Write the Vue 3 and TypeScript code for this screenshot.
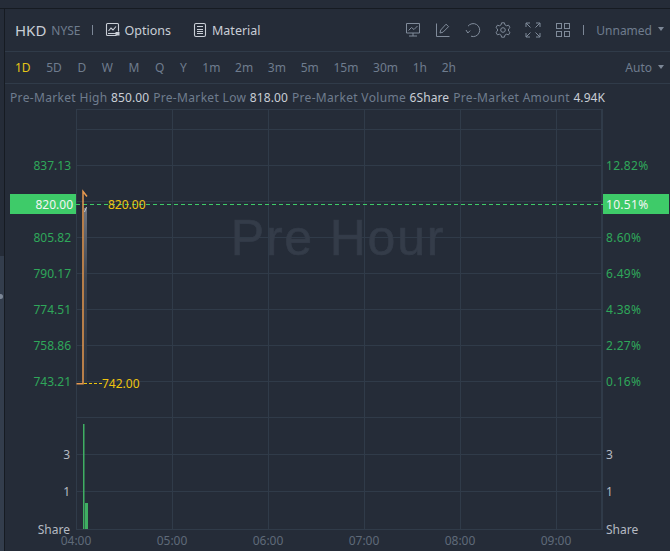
<script setup lang="ts">
const periods = ['1D','5D','D','W','M','Q','Y','1m','2m','3m','5m','15m','30m','1h','2h']
const stats = [
  ['Pre-Market High','850.00'],
  ['Pre-Market Low','818.00'],
  ['Pre-Market Volume','6Share'],
  ['Pre-Market Amount','4.94K'],
]
const hLines = [129,165,201,237,273,309,345,381,417,454,491]
const vLines = [172,268,364,460,556]
const leftLabels = [['837.13',165],['805.82',237],['790.17',273],['774.51',309],['758.86',345],['743.21',381]] as const
const rightLabels = [['12.82%',165],['8.60%',237],['6.49%',273],['4.38%',309],['2.27%',345],['0.16%',381]] as const
const times = [['04:00',76],['05:00',172],['06:00',268],['07:00',364],['08:00',460],['09:00',556]] as const
</script>

<template>
  <div class="page">
    <div class="rail"><div class="rail-top"></div><div class="rail-handle"><i></i></div></div>
    <div class="main">
      <header class="toolbar">
        <span class="sym">HKD</span>
        <span class="exch">NYSE</span>
        <span class="sep"></span>
        <button class="tool first">
          <svg width="18" height="18" viewBox="0 0 18 18" fill="none" stroke="#c9ced6" stroke-width="1.1">
            <path d="M12.5 14.5H3.5a1 1 0 0 1-1-1v-10a1 1 0 0 1 1-1h10a1 1 0 0 1 1 1v7"/>
            <path d="M4.500 10l2.500-3 2 2 3-3.500" />
            <rect x="11.500" y="11" width="4" height="3.500" fill="#c9ced6" stroke="none"/>
            <path d="M4 12.500h8" />
          </svg>
          Options
        </button>
        <button class="tool second">
          <svg width="18" height="18" viewBox="0 0 18 18" fill="none" stroke="#c9ced6" stroke-width="1.1">
            <rect x="3.500" y="2.500" width="11" height="13" rx="1.500"/>
            <path d="M6 5.500h6M6 8.500h6M6 10.500h6M6 12.500h6" stroke-width="1.2"/>
          </svg>
          Material
        </button>
        <div class="spacer"></div>
        <div class="icons">
          <svg width="16" height="16" viewBox="0 0 16 16" fill="none" stroke="#808b9a"><path d="M1.500 1.500h13v9.500h-13zM8 11v3M4 14h8"/><path d="M3.500 8.500l3-3 2.500 2 3.500-3.500"/></svg>
          <svg width="16" height="16" viewBox="0 0 16 16" fill="none" stroke="#808b9a"><path d="M1.500 1.500v13h13"/><path d="M5 11l.7-3L11 2.200l2.600 2.400L8 10.200z"/></svg>
          <svg width="16" height="16" viewBox="0 0 16 16" fill="none" stroke="#808b9a"><path d="M3 4.200A6.500 6.500 0 1 1 6 14.200"/><path d="M1 8l1.800 3 2.400-2.400"/></svg>
          <svg width="16" height="16" viewBox="0 0 16 16" fill="none" stroke="#808b9a"><path d="M6.600.8h2.800l.5 2 1.700 1 2-.6 1.400 2.400-1.500 1.400v2l1.500 1.400-1.400 2.400-2-.6-1.700 1-.5 2H6.600l-.5-2-1.700-1-2 .6L1 10.400l1.500-1.400V7L1 5.600l1.400-2.400 2 .6 1.700-1z"/><circle cx="8" cy="8" r="2.300"/></svg>
          <svg width="16" height="16" viewBox="0 0 16 16" fill="none" stroke="#808b9a"><path d="M1 5V1h4M1 1l4.500 4.500M11 1h4v4M15 1l-4.500 4.500M1 11v4h4M1 15l4.500-4.500M15 11v4h-4M15 15l-4.500-4.500"/></svg>
          <svg width="16" height="16" viewBox="0 0 16 16" fill="none" stroke="#808b9a"><rect x="1.500" y="1.500" width="5" height="5"/><rect x="9.500" y="1.500" width="5" height="5"/><rect x="1.500" y="9.500" width="5" height="5"/><rect x="9.500" y="9.500" width="5" height="5"/></svg>
        </div>
        <span class="sep right"></span>
        <span class="select">Unnamed<i class="caret"></i></span>
      </header>

      <nav class="periods">
        <span v-for="(p, i) in periods" :key="p" class="period" :class="{ active: i === 0, wide: i < 7 }">{{ p }}</span>
        <div class="spacer"></div>
        <span class="select auto">Auto<i class="caret"></i></span>
      </nav>

      <div class="stats">
        <span v-for="s in stats" :key="s[0]" class="stat">{{ s[0] }} <b>{{ s[1] }}</b></span>
      </div>
    </div>

    <svg class="chart" width="670" height="442" viewBox="0 109 670 442">
      <defs>
        <linearGradient id="fade" x1="0" y1="0" x2="0" y2="1">
          <stop offset="0" stop-color="#6d737e"/>
          <stop offset="0.4" stop-color="#3e4551"/>
          <stop offset="1" stop-color="#2b333f"/>
        </linearGradient>
      </defs>
      <g stroke="#303b49" stroke-width="1" shape-rendering="crispEdges">
        <path v-for="y in hLines" :key="y" :d="`M76 ${y + .5}H602`"/>
        <path v-for="x in vLines" :key="x" :d="`M${x + .5} 109V530`"/>
        <path d="M76 109.500H602M76.500 109V530M76 529.500H602"/>
        <path d="M602 109V530" stroke-width="2"/>
      </g>
      <text class="watermark" x="338" y="255" text-anchor="middle">Pre Hour</text>

      <g class="lbl green">
        <text v-for="l in leftLabels" :key="l[0]" x="71" :y="l[1] + 5" text-anchor="end">{{ l[0] }}</text>
        <text v-for="l in rightLabels" :key="l[0]" class="pct" x="606" :y="l[1] + 5">{{ l[0] }}</text>
      </g>

      <rect x="10" y="194" width="66" height="20" fill="#3ecb69"/>
      <rect x="603" y="194" width="66" height="20" fill="#3ecb69"/>
      <path d="M76 204.500H603" stroke="#3ecb69" stroke-dasharray="4 3" shape-rendering="crispEdges"/>
      <g class="lbl white">
        <text x="73" y="209" text-anchor="end">820.00</text>
        <text class="pct" x="606" y="209">10.51%</text>
      </g>
      <text class="lbl yellow" x="108" y="209">820.00</text>

      <rect x="84" y="208" width="3" height="176" fill="url(#fade)"/>
      <path d="M84.500 212l2-5" stroke="#c2c6cd" fill="none"/>
      <path d="M76.500 383.700H83V191.500l4 5" stroke="#e8994f" stroke-width="1.500" fill="none"/>
      <path d="M84 383.500H102" stroke="#eec40e" stroke-dasharray="3 2" shape-rendering="crispEdges"/>
      <text class="lbl yellow" x="102" y="388">742.00</text>

      <rect x="83" y="424" width="1.500" height="105" fill="#3fae62"/>
      <rect x="85" y="503" width="3" height="26" fill="#3fae62"/>

      <g class="lbl grey">
        <text x="70" y="459" text-anchor="end">3</text>
        <text x="70" y="496" text-anchor="end">1</text>
        <text x="70" y="534" text-anchor="end">Share</text>
        <text x="606" y="459">3</text>
        <text x="606" y="496">1</text>
        <text x="606" y="534">Share</text>
      </g>
      <g class="lbl time">
        <text v-for="t in times" :key="t[0]" :x="t[1]" y="545" text-anchor="middle">{{ t[0] }}</text>
      </g>
    </svg>
  </div>
</template>

<style scoped>
.page {
  position: relative;
  width: 670px;
  height: 551px;
  overflow: hidden;
  background: #252c38;
  font-family: "Noto Sans", "Open Sans", sans-serif;
  font-size: 12px;
  color: #7c8796;
}
.rail {
  position: absolute;
  left: 0;
  top: 9px;
  bottom: 0;
  width: 4px;
  display: flex;
  flex-direction: column;
  border-right: 1px solid #161b22;
}
.rail-top { height: 247px; background: #252c38; }
.rail-handle { flex: 1; background: #333d4c; position: relative; }
.rail-handle i {
  position: absolute; left: 0; top: 38px; width: 3px; height: 5px; background: #7c8796; border-radius: 0 3px 3px 0;
}
.main {
  margin-left: 5px;
  padding-top: 8px;
}
.main::before {
  content: "";
  position: absolute;
  left: 0; right: 0; top: 8px;
  height: 1px;
  background: #161b22;
}
.toolbar {
  height: 42px;
  margin-top: 1px;
  display: flex;
  align-items: center;
  padding-left: 10px;
  border-bottom: 1px solid #303b49;
  box-sizing: content-box;
}
.sym { font-size: 15px; color: #c9ced6; }
.exch { font-size: 12px; color: #6f7c8e; margin-left: 5px; }
.sep { width: 1px; height: 10px; background: #7c8796; margin-left: 11px; }
.tool {
  all: unset;
  display: flex;
  align-items: center;
  gap: 3px;
  font-size: 12.500px;
  color: #c9ced6;
}
.tool.first { margin-left: 11px; }
.tool.second { margin-left: 20px; }
.spacer { flex: 1; }
.icons { display: flex; gap: 14px; align-items: center; }
.sep.right { margin-left: 12px; }
.select { color: #6f7c8e; font-size: 12px; display: inline-flex; align-items: center; margin-left: 12px; margin-right: 6px; }
.caret {
  width: 0; height: 0; margin-left: 6px; margin-top: -2px;
  border-left: 3px solid transparent; border-right: 3px solid transparent; border-top: 4px solid #7c8796;
}
.periods {
  height: 31px;
  display: flex;
  align-items: center;
  padding-left: 10px;
  border-bottom: 1px solid #303b49;
  gap: 14.700px;
}
.period { color: #6f7c8e; font-size: 12px; }
.period.wide { margin-right: .9px; }
.period.active { color: #e5c417; }
.auto { margin: 0 6px 0 0; font-size: 12px; }
.stats {
  height: 26px;
  display: flex;
  align-items: center;
  padding-left: 5px;
  gap: 4px;
  white-space: nowrap;
  color: #6f7c8e;
}
.stat { letter-spacing: .33px; }
.stat b { font-weight: 400; color: #c9ced6; letter-spacing: .1px; }
.chart {
  position: absolute;
  left: 0;
  top: 109px;
}
.watermark {
  font-family: "Liberation Sans", sans-serif;
  font-size: 50px;
  fill: #343c49;
  stroke: #343c49;
  stroke-width: .6px;
  letter-spacing: 1.800px;
}
.lbl { font-size: 12px; font-family: "Noto Sans", "Open Sans", sans-serif; }
.pct { letter-spacing: .3px; }
.green { fill: #2fa75a; }
.white { fill: #f2f5f4; }
.yellow { fill: #eec40e; }
.grey { fill: #b5bac2; }
.time { fill: #5f6a78; }
</style>
